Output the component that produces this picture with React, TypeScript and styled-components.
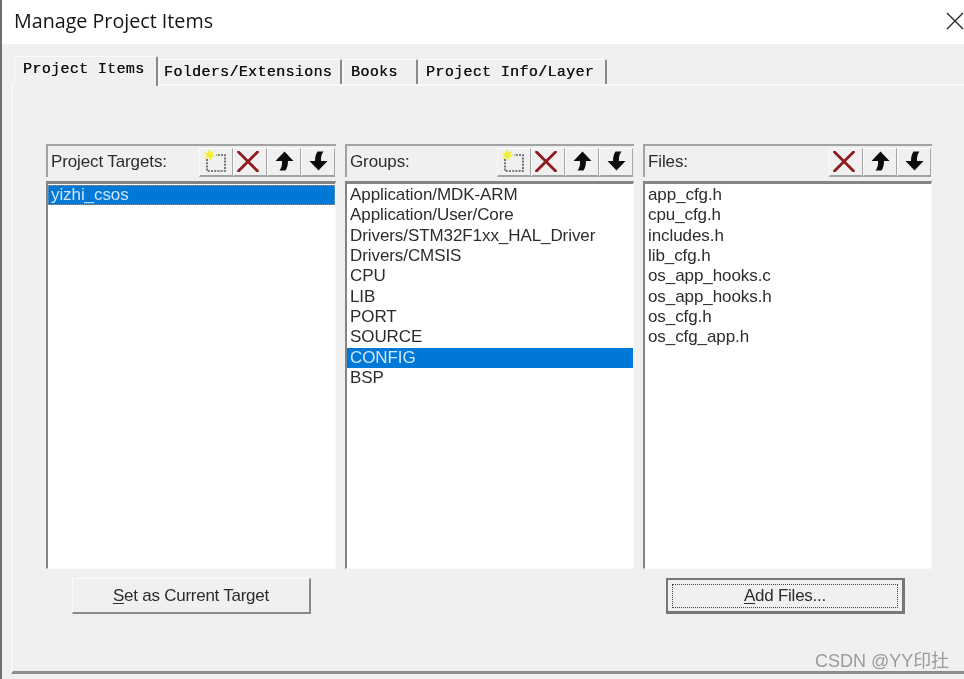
import React from "react";
import styled, { createGlobalStyle } from "styled-components";

const Global = createGlobalStyle`
  html, body { margin: 0; padding: 0; background: #f0f0f0; }
  body { font-family: "Liberation Sans", Arial, sans-serif; }
`;

const Dialog = styled.div`
  position: relative;
  width: 964px;
  height: 679px;
  box-sizing: border-box;
  overflow: hidden;
  border-left: 2px solid #6e6e6e;
  background: #f0f0f0;
  display: flex;
  flex-direction: column;
  filter: blur(0.6px);
`;

const TitleBar = styled.header`
  height: 44px;
  flex: none;
  background: #fff;
  display: flex;
  align-items: center;
  justify-content: space-between;
  padding: 0 0 3px 12px;
  box-sizing: border-box;
`;

const Title = styled.h1`
  margin: 0;
  font: 400 19.7px "Open Sans", "Liberation Sans", sans-serif;
  color: #141414;
`;

const CloseButton = styled.button`
  width: 18px;
  height: 18px;
  padding: 0;
  border: 0;
  background: none;
  display: block;
`;

const TabSheet = styled.div`
  flex: 1;
  margin: 0 0 0 9px;
  display: flex;
  flex-direction: column;
`;

const TabStrip = styled.nav`
  height: 42px;
  box-sizing: border-box;
  flex: none;
  display: flex;
  align-items: flex-end;
  gap: 1px;
  padding: 0 0 0 3px;
  border-bottom: 2px solid #f9f9f9;
`;

const Tab = styled.div<{ $active?: boolean; $width: number; $pad: number }>`
  width: ${(p) => p.$width}px;
  height: ${(p) => (p.$active ? 30 : 25)}px;
  box-sizing: border-box;
  border-top: 1px solid #fbfbfb;
  border-left: 1px solid #fbfbfb;
  border-right: 2px solid #8a8a8a;
  border-top-left-radius: 2px;
  border-top-right-radius: 2px;
  background: #f0f0f0;
  padding: 3px 0 0 ${(p) => p.$pad}px;
  font: 400 15px/20px "Liberation Mono", "DejaVu Sans Mono", monospace;
  letter-spacing: 0.34px;
  white-space: nowrap;
  color: #111;
  text-shadow: 0.3px 0 0.4px #222;
  margin-bottom: ${(p) => (p.$active ? "-2px" : "0")};
`;

const SheetBody = styled.div`
  flex: 1;
  border-left: 2px solid #f9f9f9;
  border-bottom: 3px solid #8c8c8c;
  margin-bottom: 5px;
  padding: 58px 0 0 33px;
  display: flex;
  flex-direction: column;
`;

const Columns = styled.div`
  display: flex;
  gap: 9px;
`;

const Column = styled.section`
  width: 289px;
  display: flex;
  flex-direction: column;
  flex: none;
  &:first-child { width: 290px; }
`;

const PanelHeader = styled.div`
  height: 33px;
  box-sizing: border-box;
  border-top: 2px solid #a3a3a3;
  border-left: 2px solid #a3a3a3;
  display: flex;
  align-items: flex-end;
  justify-content: space-between;
  margin-bottom: 4px;
`;

const PanelLabel = styled.span`
  font-size: 17px;
  line-height: 18px;
  padding: 0 0 6px 3px;
  letter-spacing: -0.12px;
  color: #2c2c2c;
`;

const ToolGroup = styled.div`
  display: flex;
  height: 29px;
  padding-right: 1px;
`;

const ToolButton = styled.button<{ $inset: number }>`
  width: 34px;
  height: 29px;
  box-sizing: border-box;
  padding: 0 ${(p) => p.$inset}px 2px 0;
  background: #f0f0f0;
  border: 1px solid #fbfbfb;
  border-right: 1.5px solid #a6a6a6;
  border-bottom: 2px solid #a0a0a0;
  display: flex;
  align-items: center;
  justify-content: center;
`;

const List = styled.ul`
  height: 388px;
  margin: 0;
  list-style: none;
  box-sizing: border-box;
  background: #fff;
  border-top: 3px solid #858585;
  border-left: 2px solid #858585;
  border-right: 1.5px solid #fafafa;
  border-bottom: 1.5px solid #fafafa;
  padding: 1px 0 0;
`;

const ListRow = styled.li<{ $selected?: boolean; $focused?: boolean }>`
  height: 20.33px;
  line-height: 20.5px;
  font-size: 17px;
  letter-spacing: -0.08px;
  padding-left: 3px;
  box-sizing: border-box;
  white-space: nowrap;
  color: ${(p) => (p.$selected ? "#cfe5f8" : "#2c2c2c")};
  background: ${(p) => (p.$selected ? "#0078d7" : "transparent")};
  outline: ${(p) => (p.$focused ? "1px dotted #7f98ad" : "none")};
  outline-offset: -1px;
`;

const Actions = styled.div`
  display: flex;
  margin-top: 9px;
  padding-left: 26px;
`;

const DialogButton = styled.button<{ $default?: boolean }>`
  width: 239px;
  height: 36px;
  box-sizing: border-box;
  background: #f0f0f0;
  color: #2c2c2c;
  font: 400 17px "Liberation Sans", Arial, sans-serif;
  letter-spacing: -0.25px;
  padding: 0;
  position: relative;
  border-style: solid;
  border-color: ${(p) =>
    p.$default ? "#777" : "#fbfbfb #8a8a8a #8a8a8a #fbfbfb"};
  border-width: ${(p) => (p.$default ? "2px 3px 3px 2px" : "1px 2.5px 2.5px 1px")};
  u { text-underline-offset: 2px; }
`;

const FocusRing = styled.span`
  position: absolute;
  inset: 4px 4px 3px 4px;
  border: 1.5px dotted #444;
  pointer-events: none;
`;

const ActionSpacer = styled.div`
  width: 355px;
  flex: none;
`;

const Watermark = styled.span`
  position: absolute;
  left: 813px;
  top: 646px;
  font: 400 18px "Liberation Sans", "Noto Sans CJK SC", sans-serif;
  color: #9b9b9b;
  white-space: nowrap;
`;

const NewIcon = () => (
  <svg width="24" height="24" viewBox="0 0 24 24" fill="none">
    <path d="M4 10v12h18V6H13" stroke="#555" strokeWidth="1.6" strokeDasharray="2 1.2" />
    <path d="M6 0l1.6 3.6L11.5 2 9 5.5l3.5 1.6L8.5 8 8 12 6 8.6 1 10l3-3.6L0.5 3.5l4 .4z" fill="#f4ef30" />
  </svg>
);

const DeleteIcon = () => (
  <svg width="22" height="21" viewBox="0 0 22 21" fill="none">
    <path d="M1.5 1 20.5 20M20.5 1 1.5 20" stroke="#8f1a1f" strokeWidth="2.8" strokeLinecap="round" />
  </svg>
);

const UpIcon = () => (
  <svg width="19" height="20" viewBox="0 0 19 20">
    <path d="M9.5 0.5 18.5 10H13C13 14 12.2 17 10.5 19.5H4.5C6.5 17 7.3 14 7 10H0.5Z" fill="#0c0c0c" />
  </svg>
);

const DownIcon = () => (
  <svg width="19" height="20" viewBox="0 0 19 20">
    <path d="M9.5 19.5 0.5 10H6C6 6 6.8 3 8.5 0.5H14.5C12.5 3 11.7 6 12 10H18.5Z" fill="#0c0c0c" />
  </svg>
);

const CloseIcon = () => (
  <svg width="18" height="18" viewBox="0 0 18 18" fill="none">
    <path d="M1 1 17 17M17 1 1 17" stroke="#222" strokeWidth="1.3" />
  </svg>
);

const groups = [
  "Application/MDK-ARM",
  "Application/User/Core",
  "Drivers/STM32F1xx_HAL_Driver",
  "Drivers/CMSIS",
  "CPU",
  "LIB",
  "PORT",
  "SOURCE",
  "CONFIG",
  "BSP",
];

const files = [
  "app_cfg.h",
  "cpu_cfg.h",
  "includes.h",
  "lib_cfg.h",
  "os_app_hooks.c",
  "os_app_hooks.h",
  "os_cfg.h",
  "os_cfg_app.h",
];

const tabs = [
  { label: "Project Items", width: 144, pad: 8, active: true },
  { label: "Folders/Extensions", width: 183, pad: 4 },
  { label: "Books", width: 75, pad: 7 },
  { label: "Project Info/Layer", width: 188, pad: 6 },
];

export default function App() {
  return (
    <Dialog>
      <Global />
      <TitleBar>
        <Title>Manage Project Items</Title>
        <CloseButton aria-label="Close">
          <CloseIcon />
        </CloseButton>
      </TitleBar>
      <TabSheet>
        <TabStrip>
          {tabs.map((t) => (
            <Tab key={t.label} $active={t.active} $width={t.width} $pad={t.pad}>
              {t.label}
            </Tab>
          ))}
        </TabStrip>
        <SheetBody>
          <Columns>
            <Column>
              <PanelHeader>
                <PanelLabel>Project Targets:</PanelLabel>
                <ToolGroup>
                  <ToolButton $inset={3}><NewIcon /></ToolButton>
                  <ToolButton $inset={4}><DeleteIcon /></ToolButton>
                  <ToolButton $inset={0}><UpIcon /></ToolButton>
                  <ToolButton $inset={0}><DownIcon /></ToolButton>
                </ToolGroup>
              </PanelHeader>
              <List>
                <ListRow $selected $focused>yizhi_csos</ListRow>
              </List>
            </Column>
            <Column>
              <PanelHeader>
                <PanelLabel>Groups:</PanelLabel>
                <ToolGroup>
                  <ToolButton $inset={3}><NewIcon /></ToolButton>
                  <ToolButton $inset={4}><DeleteIcon /></ToolButton>
                  <ToolButton $inset={0}><UpIcon /></ToolButton>
                  <ToolButton $inset={0}><DownIcon /></ToolButton>
                </ToolGroup>
              </PanelHeader>
              <List>
                {groups.map((g) => (
                  <ListRow key={g} $selected={g === "CONFIG"}>{g}</ListRow>
                ))}
              </List>
            </Column>
            <Column>
              <PanelHeader>
                <PanelLabel>Files:</PanelLabel>
                <ToolGroup>
                  <ToolButton $inset={4}><DeleteIcon /></ToolButton>
                  <ToolButton $inset={0}><UpIcon /></ToolButton>
                  <ToolButton $inset={0}><DownIcon /></ToolButton>
                </ToolGroup>
              </PanelHeader>
              <List>
                {files.map((f) => (
                  <ListRow key={f}>{f}</ListRow>
                ))}
              </List>
            </Column>
          </Columns>
          <Actions>
            <DialogButton><u>S</u>et as Current Target</DialogButton>
            <ActionSpacer />
            <DialogButton $default>
              <FocusRing />
              <u>A</u>dd Files...
            </DialogButton>
          </Actions>
        </SheetBody>
      </TabSheet>
      <Watermark>CSDN @YY印扗</Watermark>
    </Dialog>
  );
}
